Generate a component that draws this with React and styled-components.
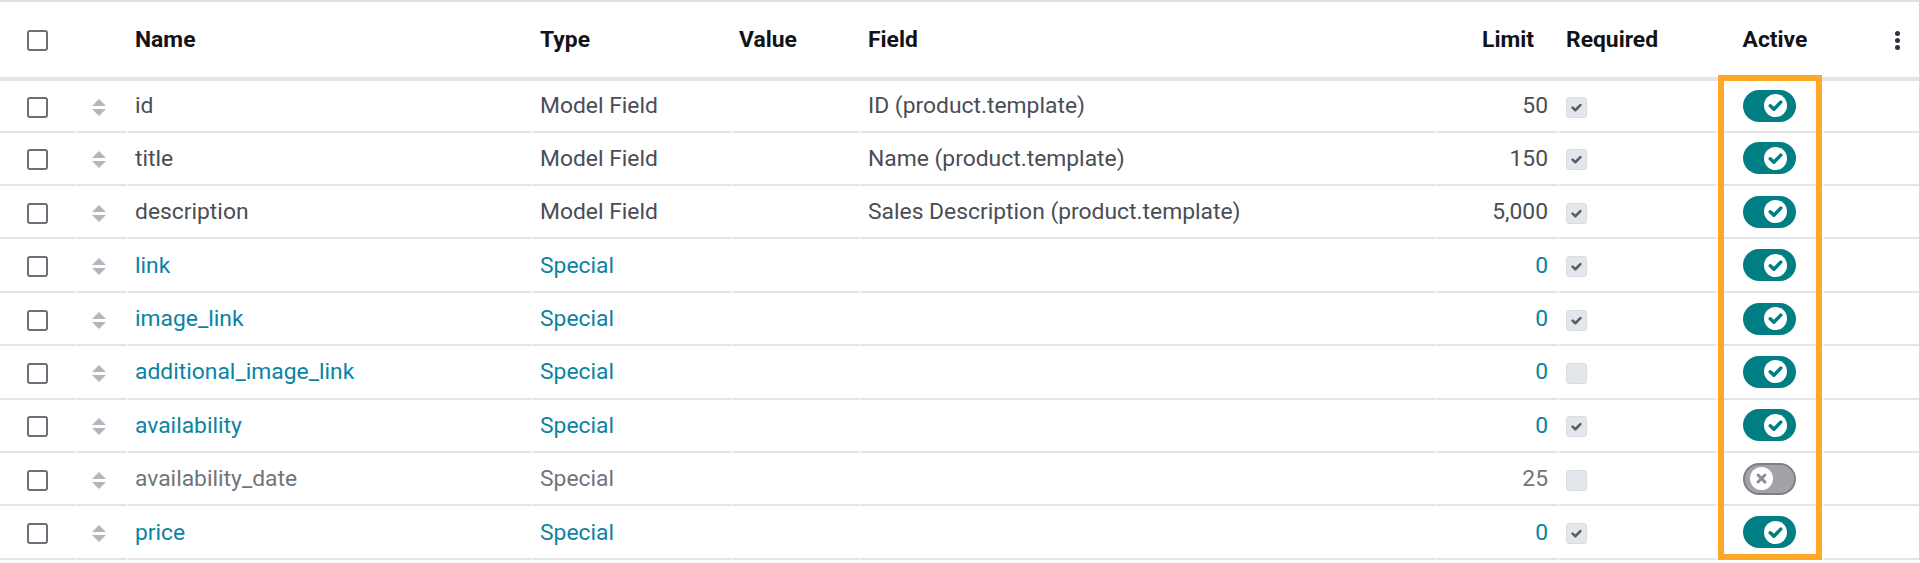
import React from "react";
import styled, { createGlobalStyle } from "styled-components";

const Global = createGlobalStyle`
  html, body { margin: 0; padding: 0; background: #fff; }
  body { font-family: Roboto, "Noto Sans", sans-serif; }
`;

const Wrap = styled.div`
  position: relative;
  width: 1920px;
  height: 563px;
  overflow: hidden;
  background: #fff;
`;

const Table = styled.table`
  width: 1919px;
  table-layout: fixed;
  border-collapse: separate;
  border-spacing: 0;
  border-top: 2px solid #dfe1e6;
  border-right: 1px solid #d6d8dd;
  font-size: 22.85px;
  color: #4a4d55;
`;

const Th = styled.th`
  height: 75px;
  padding: 0 8px;
  text-align: ${(p) => p.$align || "left"};
  padding-right: ${(p) => p.$pr || 8}px;
  padding-left: ${(p) => p.$pl || 8}px;
  font-weight: 700;
  color: #111318;
  white-space: nowrap;
  vertical-align: middle;
  border-bottom: 4px solid #e3e4e9;
`;

const Tr = styled.tr`
  color: ${(p) =>
    p.$tone === "link" ? "#0a83a3" : p.$tone === "muted" ? "#70747c" : "#4a4d55"};
  &:first-child > td { height: 49.7px; }
`;

const Td = styled.td`
  height: 51.4px;
  padding: 0 8px;
  padding-right: ${(p) => p.$pr || 8}px;
  text-align: ${(p) => p.$align || "left"};
  white-space: nowrap;
  vertical-align: middle;
  background: linear-gradient(#e2e4e8, #e2e4e8) ${(p) => (p.$first ? 0 : 1)}px 100% /
    calc(100% - ${(p) => (p.$first ? 0 : 1)}px) 2px no-repeat;
  padding-bottom: 2px;
`;

const Box = styled.span`
  display: inline-block;
  width: 21px;
  height: 21px;
  box-sizing: border-box;
  border: 2px solid #6b6f78;
  border-radius: 3px;
  background: #fff;
  vertical-align: middle;
  margin-left: 19px;
`;

const ReqBox = styled.span`
  display: inline-flex;
  align-items: center;
  justify-content: center;
  width: 21px;
  height: 21px;
  box-sizing: border-box;
  border: 1px solid #d9dce1;
  border-radius: 3px;
  background: #e3e6ea;
  vertical-align: middle;
`;

const Handle = styled.span`
  display: inline-flex;
  flex-direction: column;
  align-items: center;
  gap: 3px;
  vertical-align: middle;
  margin-left: 9px;
`;

const Tri = styled.span`
  width: 0;
  height: 0;
  border-left: 7px solid transparent;
  border-right: 7px solid transparent;
  ${(p) => (p.$up ? "border-bottom" : "border-top")}: 7px solid #b3b7bd;
`;

const Toggle = styled.span`
  display: inline-flex;
  align-items: center;
  justify-content: ${(p) => (p.$on ? "flex-end" : "flex-start")};
  box-sizing: border-box;
  width: 53px;
  height: 32px;
  border-radius: 16px;
  padding: 0 ${(p) => (p.$on ? 9 : 5)}px;
  background: ${(p) => (p.$on ? "#017e84" : "#a2a3a7")};
  border: ${(p) => (p.$on ? "none" : "2px solid #7d8088")};
  vertical-align: middle;
`;

const Knob = styled.span`
  display: inline-flex;
  align-items: center;
  justify-content: center;
  width: 23px;
  height: 23px;
  border-radius: 50%;
  background: #fff;
`;

const Kebab = styled.span`
  display: inline-flex;
  flex-direction: column;
  gap: 2px;
  vertical-align: middle;
  & > i {
    width: 5px;
    height: 5px;
    border-radius: 50%;
    background: #2f3340;
  }
`;

const Highlight = styled.div`
  position: absolute;
  left: 1718px;
  top: 75px;
  width: 104px;
  height: 485px;
  box-sizing: border-box;
  border: 6px solid #ffa726;
  pointer-events: none;
`;

const Check = ({ color, size = 12, w = 3 }) => (
  <svg width={size} height={size} viewBox="0 0 12 12">
    <path d="M1.8 6.2 L4.7 9 L10.2 3.3" fill="none" stroke={color} strokeWidth={w} strokeLinecap="round" strokeLinejoin="round" />
  </svg>
);

const Cross = () => (
  <svg width="13" height="13" viewBox="0 0 12 12">
    <path d="M2.8 2.8 L9.2 9.2 M9.2 2.8 L2.8 9.2" stroke="#8d8e92" strokeWidth="2.8" strokeLinecap="round" />
  </svg>
);

const rows = [
  { name: "id", type: "Model Field", field: "ID (product.template)", limit: "50", req: true, on: true },
  { name: "title", type: "Model Field", field: "Name (product.template)", limit: "150", req: true, on: true },
  { name: "description", type: "Model Field", field: "Sales Description (product.template)", limit: "5,000", req: true, on: true },
  { name: "link", type: "Special", field: "", limit: "0", req: true, on: true, tone: "link" },
  { name: "image_link", type: "Special", field: "", limit: "0", req: true, on: true, tone: "link" },
  { name: "additional_image_link", type: "Special", field: "", limit: "0", req: false, on: true, tone: "link" },
  { name: "availability", type: "Special", field: "", limit: "0", req: true, on: true, tone: "link" },
  { name: "availability_date", type: "Special", field: "", limit: "25", req: false, on: false, tone: "muted" },
  { name: "price", type: "Special", field: "", limit: "0", req: true, on: true, tone: "link" },
];

const widths = [75, 52, 405, 199, 129, 576, 122, 158, 107, 96];

export default function App() {
  return (
    <Wrap>
      <Global />
      <Table>
        <colgroup>
          {widths.map((w, i) => (
            <col key={i} style={{ width: w }} />
          ))}
        </colgroup>
        <thead>
          <tr>
            <Th $pl={8}><Box /></Th>
            <Th />
            <Th>Name</Th>
            <Th>Type</Th>
            <Th>Value</Th>
            <Th>Field</Th>
            <Th $align="right" $pr={24}>Limit</Th>
            <Th>Required</Th>
            <Th $align="center" $pl={19}>Active</Th>
            <Th $align="right" $pr={19}>
              <Kebab><i /><i /><i /></Kebab>
            </Th>
          </tr>
        </thead>
        <tbody>
          {rows.map((r) => (
            <Tr key={r.name} $tone={r.tone}>
              <Td $first><Box /></Td>
              <Td><Handle><Tri $up /><Tri /></Handle></Td>
              <Td>{r.name}</Td>
              <Td>{r.type}</Td>
              <Td />
              <Td>{r.field}</Td>
              <Td $align="right" $pr={10}>{r.limit}</Td>
              <Td>
                <ReqBox>{r.req && <Check color="#5a5e66" size={11} w={2.8} />}</ReqBox>
              </Td>
              <Td $align="center">
                <Toggle $on={r.on}>
                  <Knob>{r.on ? <Check color="#017e84" size={15} w={2.8} /> : <Cross />}</Knob>
                </Toggle>
              </Td>
              <Td />
            </Tr>
          ))}
        </tbody>
      </Table>
      <Highlight />
    </Wrap>
  );
}
